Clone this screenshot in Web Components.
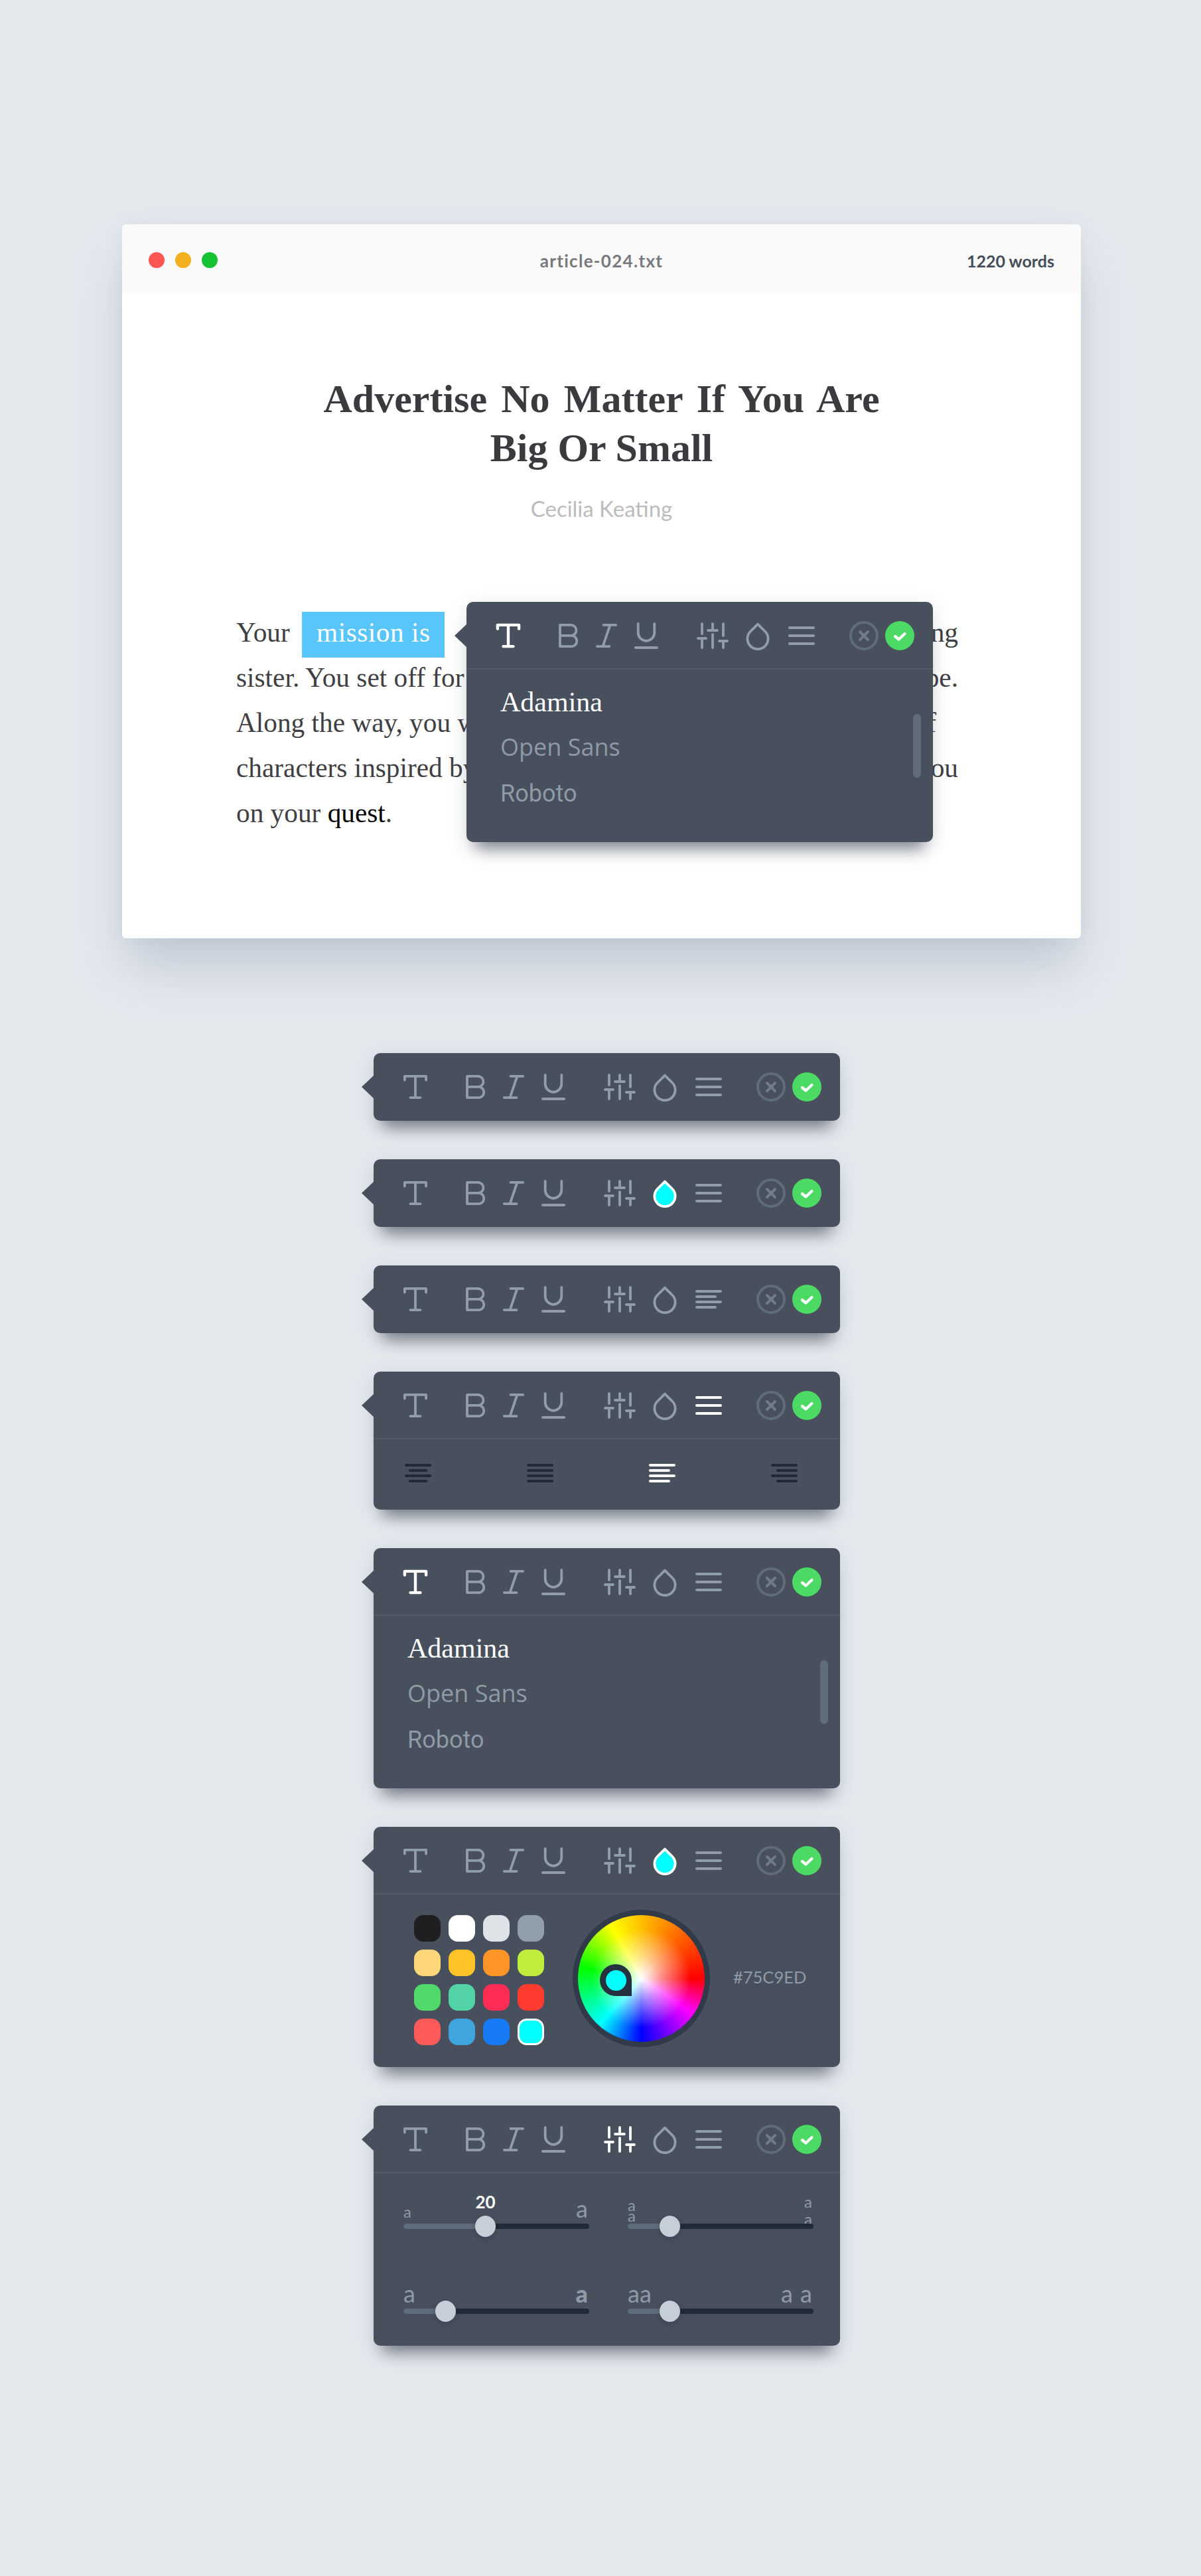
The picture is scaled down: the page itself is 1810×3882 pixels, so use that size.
<!DOCTYPE html>
<html lang="en">
<head>
<meta charset="utf-8">
<title>Text format toolbar</title>
<style>
    html, body { margin: 0; background: #e5e9ee; }
    body { font-family: "Lato", "Liberation Sans", sans-serif; height: 3882px; overflow: hidden; }
    .stack { display: flex; flex-direction: column; gap: 58px; margin: 173px 0 0 563px; }
</style>
</head>
<body>

<editor-window name="article-024.txt" words="1220 words">
    <format-panel active="font" open>
        <font-list slot="body"></font-list>
    </format-panel>
</editor-window>

<div class="stack">
    <format-panel></format-panel>
    <format-panel drop-color="#00ffff"></format-panel>
    <format-panel menu="left"></format-panel>
    <format-panel active="menu" open>
        <align-row slot="body"></align-row>
    </format-panel>
    <format-panel active="font" open>
        <font-list slot="body"></font-list>
    </format-panel>
    <format-panel drop-color="#00ffff" open>
        <color-picker slot="body" hex="#75C9ED"></color-picker>
    </format-panel>
    <format-panel active="sliders" open>
        <type-sliders slot="body"></type-sliders>
    </format-panel>
</div>

<script>
const ICONS = {
    font: [36, 36, `<path d="M1.9 7.5V1.9H34.1V7.5M18 1.9V34.1M10.5 34.1H25.5"/>`],
    bold: [30, 36, `<path d="M2 17.8V1.9H18.5a8 8 0 0 1 0 16H2V34.1H20a8.2 8.2 0 0 0 0-16.3"/>`],
    italic: [32, 36, `<path d="M11.5 1.9H30.1M21.5 1.9L10.5 34.1M1.9 34.1H20.5"/>`],
    underline: [36, 40, `<path d="M5.7 1.9V15.5a12.3 12.3 0 0 0 24.6 0V1.9"/><path d="M2 38H34" stroke-width="4"/>`],
    sliders: [48, 40, `<path d="M8 2V17M2 24H14M8 24V38M24 2V12M17 12H31M24 18V38M40 2V20M34 28H46M40 28V38"/>`],
    drop: [36, 42, `<path d="M18 2.6L7 13.5A15.6 15.6 0 1 0 29 13.5Z"/>`],
    menu: [40, 28, `<path d="M2 2H38M2 14H38M2 26H38" stroke-width="4"/>`],
    left: [40, 28, `<path d="M2 2H38M2 10H30M2 18H38M2 26H30" stroke-width="4"/>`]
}

function iconSvg(name, extra = '') {
    const [w, h, body] = ICONS[name]
    return `<svg class="${name}" width="${w}" height="${h}" viewBox="0 0 ${w} ${h}" fill="none" stroke="currentColor" stroke-width="3.8" stroke-linecap="round" stroke-linejoin="round" ${extra}>${body}</svg>`
}

class EditorWindow extends HTMLElement {
    constructor() {
        super()
        this.shadow = this.attachShadow({ mode: "open" })
        this.shadow.innerHTML = `
        <style>
            :host {
                display: block;
                position: relative;
                box-sizing: border-box;
                width: 1445px;
                height: 1076px;
                margin: 338px 0 0 184px;
                background: #fff;
                border-radius: 6px;
                box-shadow: 0 50px 70px -10px rgba(130, 146, 170, .38), 0 0 24px rgba(130, 146, 170, .1);
                color: #3f3f44;
            }
            header {
                height: 105px;
                padding: 0 40px;
                display: grid;
                grid-template-columns: 1fr auto 1fr;
                align-items: center;
                background: #fafafa;
                border-radius: 6px 6px 0 0;
                font: 700 26px "Lato", "Liberation Sans", sans-serif;
            }
            .dots { display: flex; gap: 16px; margin-top: 2px; }
            .dots i { width: 24px; height: 24px; border-radius: 50%; }
            .name { color: #77797d; margin-top: 4px; letter-spacing: 1.3px; }
            .words { justify-self: end; color: #434c58; font-size: 25px; margin-top: 4px; }
            h1 {
                margin: 121px 0 0;
                text-align: center;
                font: 700 60px/74px "Liberation Serif", serif;
                color: #3a3a3f;
            }
            h1 span { word-spacing: 6.2px; }
            .author {
                margin-top: 34px;
                text-align: center;
                font: 400 33px/40px "Lato", "Liberation Sans", sans-serif;
                color: #bcbcbf;
            }
            article {
                margin: 133px 185px 0 172px;
                font: 400 41.3px/68px "Liberation Serif", serif;
                color: #3f3f44;
            }
            .line { display: flex; justify-content: space-between; white-space: nowrap; }
            .line.third { padding-right: 33px; }
            mark {
                background: #59c6fb;
                color: #fff;
                padding: 8px 22px 15px;
                margin: 0 8px 0 8px;
                letter-spacing: .5px;
            }
            b { font-weight: 400; color: #000; }
            ::slotted(format-panel) { position: absolute; left: 519px; top: 569px; }
        </style>
        <header>
            <div class="dots">
                <i style="background:#fc5753"></i><i style="background:#f5b01f"></i><i style="background:#15c232"></i>
            </div>
            <div class="name">${this.getAttribute('name')}</div>
            <div class="words">${this.getAttribute('words')}</div>
        </header>
        <h1><span>Advertise No Matter If You Are</span><br>Big Or Small</h1>
        <div class="author">Cecilia Keating</div>
        <article>
            <div class="line"><span>Your <mark>mission is</mark></span><span>ng</span></div>
            <div class="line"><span>sister. You set off for</span><span>pe.</span></div>
            <div class="line third"><span>Along the way, you will</span><span>of</span></div>
            <div class="line"><span>characters inspired by</span><span>you</span></div>
            <div class="line"><span>on your <b>quest</b>.</span></div>
        </article>
        <slot></slot>
        `
    }
}

class FormatPanel extends HTMLElement {
    constructor() {
        super()
        this.shadow = this.attachShadow({ mode: "open" })
        const active = this.getAttribute('active')
        const dropColor = this.getAttribute('drop-color')
        const tool = (name, gap) => {
            let extra = ''
            if (name === 'drop' && dropColor) extra = `style="fill:${dropColor};color:#fff"`
            const shown = name === 'menu' && this.getAttribute('menu') === 'left' ? 'left' : name
            return `<span class="tool ${active === name ? 'on' : ''}" style="margin-left:${gap}px">${iconSvg(shown, extra)}</span>`
        }
        this.shadow.innerHTML = `
        <style>
            :host {
                display: block;
                position: relative;
                width: 703px;
                background: #47505c;
                border-radius: 10px;
                box-shadow: 0 24px 22px -14px rgba(38, 47, 62, .55), 0 6px 30px rgba(70, 82, 104, .14);
            }
            :host::before {
                content: "";
                position: absolute;
                left: -18px;
                top: 33px;
                width: 19px;
                height: 36px;
                background: #47505c;
                clip-path: polygon(100% 0, 0 50%, 100% 100%);
            }
            .toolbar {
                box-sizing: border-box;
                height: 102px;
                padding-top: 2px;
                display: flex;
                align-items: center;
                border-bottom: 2px solid transparent;
                color: #919daa;
            }
            :host([open]) .toolbar { border-bottom-color: #535d6a; }
            .tool { display: block; height: auto; line-height: 0; }
            .tool.on { color: #fff; }
            .tool .font { overflow: visible; }
            .tool.on .font { stroke-width: 4.4; }
            .tool .drop { margin-top: 2px; }
            .ring circle { stroke: #5f6c7b; }
            .ring path { stroke: #6f7b89; }
        </style>
        <div class="toolbar">
            ${tool('font', 45)}
            ${tool('bold', 58)}
            ${tool('italic', 26)}
            ${tool('underline', 26)}
            ${tool('sliders', 58)}
            ${tool('drop', 26)}
            ${tool('menu', 28)}
            <svg class="ring" style="margin-left:52px" width="44" height="44" viewBox="0 0 44 44" fill="none" stroke-width="4" stroke-linecap="round">
                <circle cx="22" cy="22" r="20"/><path d="M16 16L28 28M28 16L16 28"/>
            </svg>
            <svg style="margin-left:10px" width="44" height="44" viewBox="0 0 44 44" fill="none" stroke-width="4.2" stroke-linecap="round" stroke-linejoin="round">
                <circle cx="22" cy="22" r="22" fill="#4cd964"/><path d="M15 23L20.5 27.5L29.5 19" stroke="#fff"/>
            </svg>
        </div>
        <slot name="body"></slot>
        `
    }
}

class FontList extends HTMLElement {
    constructor() {
        super()
        this.shadow = this.attachShadow({ mode: "open" })
        this.shadow.innerHTML = `
        <style>
            :host {
                display: block;
                position: relative;
                box-sizing: border-box;
                height: 260px;
                padding: 15px 0 0 51px;
            }
            div { line-height: 68px; color: #8e9aa7; white-space: nowrap; }
            .adamina { font: 400 42px/68px "Liberation Serif", serif; color: #fff; }
            .open { font: 400 36px/68px "Open Sans", sans-serif; }
            .roboto { font: 400 36px/72px "Roboto", sans-serif; }
            .bar {
                position: absolute;
                left: 673px;
                top: 67px;
                width: 12px;
                height: 96px;
                border-radius: 6px;
                background: #5f6d7c;
            }
        </style>
        <div class="adamina">Adamina</div>
        <div class="open">Open Sans</div>
        <div class="roboto">Roboto</div>
        <span class="bar"></span>
        `
    }
}

class AlignRow extends HTMLElement {
    constructor() {
        super()
        this.shadow = this.attachShadow({ mode: "open" })
        const bars = (widths, align, on) => `
            <span class="set ${on ? 'on' : ''}" style="align-items:${align}">
                ${widths.map(w => `<i style="width:${w}px"></i>`).join('')}
            </span>`
        this.shadow.innerHTML = `
        <style>
            :host {
                display: flex;
                box-sizing: border-box;
                height: 106px;
                padding: 37px 64px 0 47px;
                justify-content: space-between;
            }
            .set { display: flex; flex-direction: column; gap: 4px; width: 40px; height: 28px; color: #1f2a36; }
            .set.on { color: #fff; }
            i { display: block; height: 4px; border-radius: 2px; background: currentColor; }
        </style>
        ${bars([40, 28, 40, 28], 'center')}
        ${bars([40, 40, 40, 40], 'flex-start')}
        ${bars([40, 32, 40, 32], 'flex-start', true)}
        ${bars([40, 32, 40, 32], 'flex-end')}
        `
    }
}

class ColorPicker extends HTMLElement {
    constructor() {
        super()
        this.shadow = this.attachShadow({ mode: "open" })
        const colors = ['#1f1f21', '#ffffff', '#dfe3e8', '#919eab',
            '#ffd778', '#ffc32a', '#ff9527', '#bfee3e',
            '#51d96c', '#53d2a6', '#ff2d55', '#ff3b30',
            '#ff5a5a', '#3ea6dc', '#167bf5', '#00ffff']
        this.shadow.innerHTML = `
        <style>
            :host {
                display: flex;
                box-sizing: border-box;
                height: 260px;
                padding: 23px 0 0 61px;
            }
            .swatches {
                display: grid;
                grid-template-columns: repeat(4, 40px);
                grid-auto-rows: 40px;
                gap: 12px;
                margin-top: 8px;
                align-self: flex-start;
            }
            .swatches i { border-radius: 14px; box-sizing: border-box; }
            .swatches i.on { border: 3px solid #fff; }
            .wheel {
                position: relative;
                box-sizing: border-box;
                width: 207px;
                height: 207px;
                margin-left: 43px;
                border: 8px solid #303a48;
                border-radius: 50%;
                background:
                    radial-gradient(circle closest-side, #fff 0, rgba(255, 255, 255, .5) 35%, rgba(255, 255, 255, 0) 78%),
                    conic-gradient(from 90deg, #f00 0deg, #f0f 34deg, #00f 90deg, #0ff 132deg, #0f0 190deg, #ff0 240deg, #f00 360deg);
            }
            .pin {
                position: absolute;
                left: 33px;
                top: 74px;
                display: flex;
                align-items: center;
                justify-content: center;
                width: 48px;
                height: 48px;
                border-radius: 50% 50% 0 50%;
                background: #263140;
            }
            .pin i { width: 31px; height: 31px; border-radius: 50%; background: #0ff; }
            .hex {
                margin: 85px 0 0 35px;
                font: 400 25.5px/32px "Lato", "Liberation Sans", sans-serif;
                color: #8e9aa7;
            }
        </style>
        <div class="swatches">
            ${colors.map((c, i) => `<i class="${i === 15 ? 'on' : ''}" style="background:${c}"></i>`).join('')}
        </div>
        <div class="wheel"><span class="pin"><i></i></span></div>
        <div class="hex">${this.getAttribute('hex')}</div>
        `
    }
}

class TypeSlider extends HTMLElement {
    static get observedAttributes() {
        return [`value`, `bubble`]
    }

    constructor() {
        super()
        this.shadow = this.attachShadow({ mode: "open" })
        this.shadow.innerHTML = `
        <style>
            :host {
                display: block;
                position: relative;
                width: 280px;
                height: 84px;
                font-family: "Lato", "Liberation Sans", sans-serif;
                color: #8e9aa7;
            }
            .track {
                position: absolute;
                left: 0;
                right: 0;
                bottom: 0;
                height: 8px;
                border-radius: 4px;
                background: #202b37;
            }
            .fill {
                position: absolute;
                left: 0;
                top: 0;
                height: 100%;
                border-radius: 4px 0 0 4px;
                background: #5e6c7b;
            }
            .thumb {
                position: absolute;
                top: -12px;
                width: 31px;
                height: 32px;
                margin-left: -15px;
                border-radius: 50%;
                background: #c6cfd8;
                box-shadow: 0 3px 8px rgba(30, 38, 50, .3);
            }
            .bubble {
                position: absolute;
                left: 50%;
                bottom: 38px;
                transform: translateX(-50%);
                font: 700 26px/30px "Lato", "Liberation Sans", sans-serif;
                color: #fff;
            }
            .labels {
                position: absolute;
                left: 0;
                right: 2px;
                bottom: 16px;
                display: flex;
                justify-content: space-between;
                align-items: flex-end;
            }
        </style>
        <div class="labels"><slot name="left"></slot><slot name="right"></slot></div>
        <div class="track">
            <div class="fill"></div>
            <div class="thumb"><span class="bubble"></span></div>
        </div>
        `
    }

    attributeChangedCallback(name, oldValue, newValue) {
        switch (name) {
            case 'value':
                this.shadow.querySelector('.fill').style.width = `${newValue}px`
                this.shadow.querySelector('.thumb').style.left = `${newValue}px`
                break
            case 'bubble':
                this.shadow.querySelector('.bubble').textContent = newValue
                break
        }
    }
}

class TypeSliders extends HTMLElement {
    constructor() {
        super()
        this.shadow = this.attachShadow({ mode: "open" })
        this.shadow.innerHTML = `
        <style>
            :host {
                display: grid;
                box-sizing: border-box;
                height: 260px;
                padding-left: 45px;
                grid-template-columns: 280px 280px;
                grid-auto-rows: 84px;
                column-gap: 58px;
                row-gap: 44px;
            }
        </style>
        <slot></slot>
        `
        const big = 'font-size:36px;line-height:30px;display:block'
        const small = 'font-size:24px;display:block'
        this.innerHTML = `
        <type-slider value="123" bubble="20">
            <span slot="left" style="${small};line-height:20px">a</span>
            <span slot="right" style="${big}">a</span>
        </type-slider>
        <type-slider value="63">
            <span slot="left" style="${small};line-height:16px;margin-bottom:-4px">a<br>a</span>
            <span slot="right" style="${small};line-height:26px;margin-bottom:-14px">a<br>a</span>
        </type-slider>
        <type-slider value="63">
            <span slot="left" style="${big}">a</span>
            <span slot="right" style="${big};font-weight:900">a</span>
        </type-slider>
        <type-slider value="63">
            <span slot="left" style="${big}">aa</span>
            <span slot="right" style="${big};word-spacing:2px">a a</span>
        </type-slider>
        `
    }
}

customElements.define('editor-window', EditorWindow)
customElements.define('format-panel', FormatPanel)
customElements.define('font-list', FontList)
customElements.define('align-row', AlignRow)
customElements.define('color-picker', ColorPicker)
customElements.define('type-slider', TypeSlider)
customElements.define('type-sliders', TypeSliders)
</script>
</body>
</html>
